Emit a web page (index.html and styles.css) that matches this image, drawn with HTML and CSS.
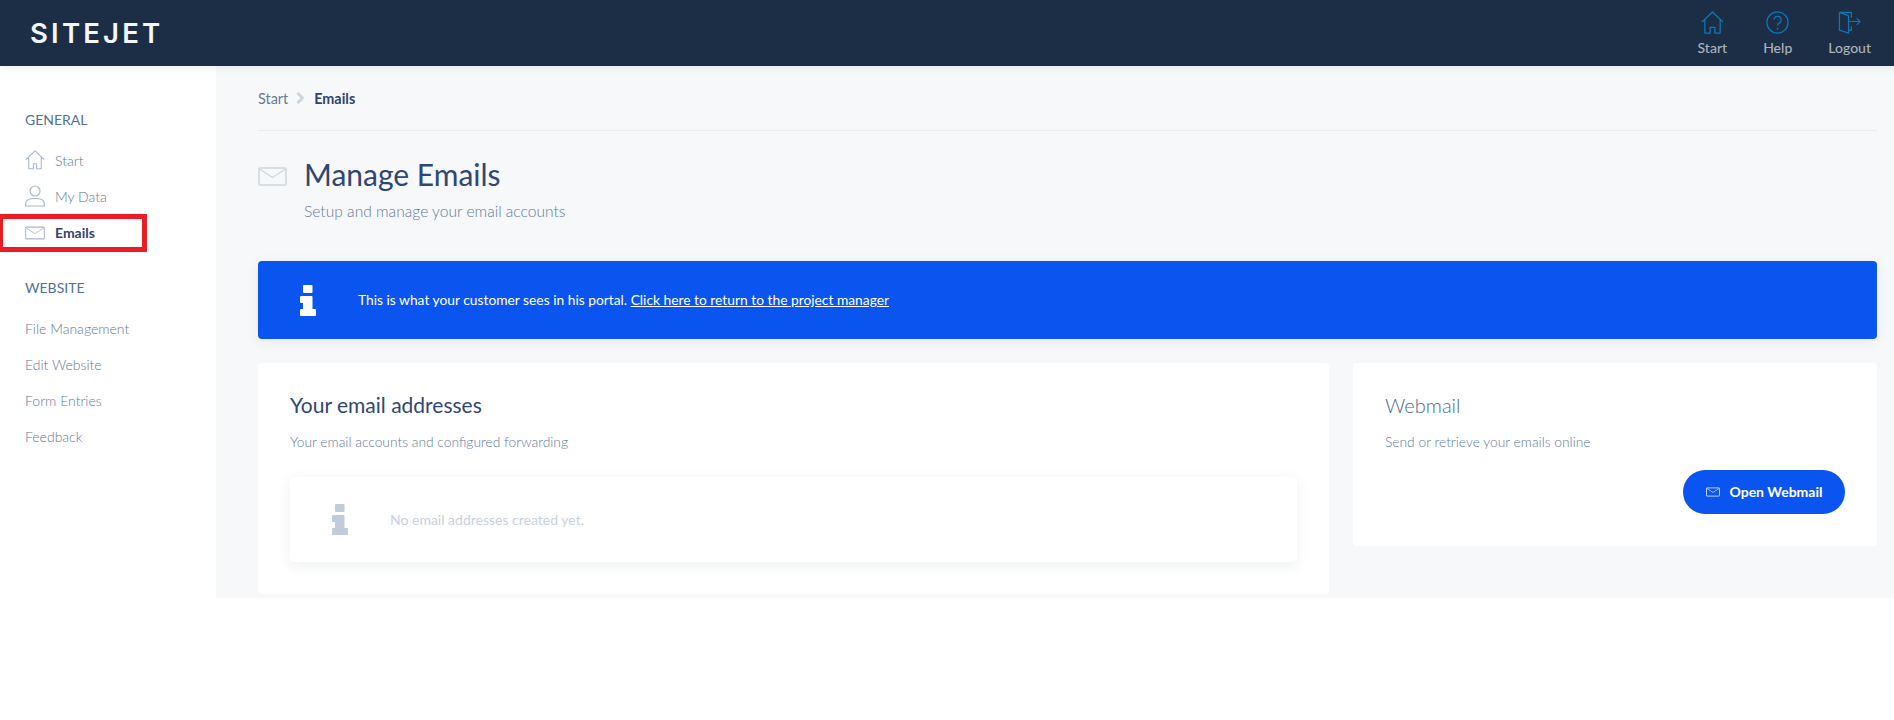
FILE: index.html
```html
<!DOCTYPE html>
<html lang="en">
<head>
<meta charset="utf-8">
<title>Manage Emails</title>
<link rel="stylesheet" href="styles.css">
</head>
<body>
<svg class="defs" width="0" height="0" aria-hidden="true">
  <symbol id="mail" viewBox="0 0 29 19"><rect x="1" y="1" width="27" height="17" rx="1" fill="none" stroke="currentColor" stroke-width="1.5"/><path d="M1.500 2l13 8.500 13-8.500" fill="none" stroke="currentColor" stroke-width="1.200"/></symbol>
  <symbol id="house" viewBox="0 0 24 24"><path d="M1 11.500L12 1l11 10.500M4.500 9v13.500h5.500v-6h4v6h5.500V9" fill="none" stroke="currentColor" stroke-width="1.300" stroke-linejoin="round"/></symbol>
  <symbol id="info" viewBox="0 0 16 31"><path d="M4 0h7.500a1 1 0 0 1 1 1v6a1 1 0 0 1-1 1H4a1 1 0 0 1-1-1V1a1 1 0 0 1 1-1zM1 11h10.500a1 1 0 0 1 1 1v12H15a1 1 0 0 1 1 1v5a1 1 0 0 1-1 1H1a1 1 0 0 1-1-1v-5a1 1 0 0 1 1-1h2v-6H1a1 1 0 0 1-1-1v-5a1 1 0 0 1 1-1z" fill="currentColor"/></symbol>
</svg>

<header class="topbar">
  <div class="logo">SITEJET</div>
  <nav class="topnav">
    <a class="topnav-item">
      <svg class="top-icon" viewBox="0 0 24 24"><path d="M1 11.500L12 1l11 10.500M4 9v14h5.500v-6h5v6H20V9" fill="none" stroke="currentColor" stroke-width="1.300" stroke-linejoin="round"/></svg>
      <span>Start</span>
    </a>
    <a class="topnav-item">
      <svg class="top-icon" viewBox="0 0 24 24"><circle cx="12" cy="12" r="11" fill="none" stroke="currentColor" stroke-width="1.300"/><path d="M8.300 9.200a3.800 3.800 0 1 1 5.800 3.200c-1.300.8-2.100 1.500-2.100 3" fill="none" stroke="currentColor" stroke-width="1.300"/><circle cx="12" cy="18.500" r=".9" fill="currentColor"/></svg>
      <span>Help</span>
    </a>
    <a class="topnav-item">
      <svg class="top-icon" viewBox="0 0 24 24"><path d="M14 7V1.500H1.500V20l9.500 3V5L1.500 1.500M14 16v4h-3" fill="none" stroke="currentColor" stroke-width="1.300" stroke-linejoin="round"/><path d="M11 11h12M19.500 7.500L23 11l-3.500 3.500" fill="none" stroke="currentColor" stroke-width="1.100"/></svg>
      <span>Logout</span>
    </a>
  </nav>
</header>

<div class="shell">
  <aside class="sidebar">
    <h4 class="side-head">GENERAL</h4>
    <ul class="side-list">
      <li class="side-item"><svg class="side-icon"><use href="#house"/></svg>Start</li>
      <li class="side-item"><svg class="side-icon" viewBox="0 0 20 22"><circle cx="10" cy="6" r="5" fill="none" stroke="currentColor" stroke-width="1.200"/><path d="M.7 21v-2.500c0-3 3-5 9.300-5s9.300 2 9.300 5V21z" fill="none" stroke="currentColor" stroke-width="1.200"/></svg>My Data</li>
      <li class="side-item active"><svg class="side-icon mail-icon"><use href="#mail"/></svg>Emails<span class="marker"></span></li>
    </ul>
    <h4 class="side-head second">WEBSITE</h4>
    <ul class="side-list">
      <li class="side-item">File Management</li>
      <li class="side-item">Edit Website</li>
      <li class="side-item">Form Entries</li>
      <li class="side-item">Feedback</li>
    </ul>
  </aside>

  <main class="main">
    <div class="crumbs"><span>Start</span><svg class="crumb-sep" viewBox="0 0 8 12"><path d="M1.500 1l5 5-5 5" fill="none" stroke="currentColor" stroke-width="3"/></svg><strong>Emails</strong></div>

    <div class="page-head">
      <svg class="head-icon"><use href="#mail"/></svg>
      <div>
        <h1>Manage Emails</h1>
        <p>Setup and manage your email accounts</p>
      </div>
    </div>

    <div class="banner">
      <svg class="banner-icon"><use href="#info"/></svg>
      <span class="banner-text">This is what your customer sees in his portal. <a class="banner-link">Click here to return to the project manager</a></span>
    </div>

    <div class="cards">
      <section class="card left">
        <h2>Your email addresses</h2>
        <p class="card-sub">Your email accounts and configured forwarding</p>
        <div class="empty">
          <svg class="empty-icon"><use href="#info"/></svg>
          <span>No email addresses created yet.</span>
        </div>
      </section>
      <section class="card right">
        <h2 class="soft">Webmail</h2>
        <p class="card-sub">Send or retrieve your emails online</p>
        <div class="btn-row">
          <a class="btn"><svg class="btn-icon"><use href="#mail"/></svg><span class="btn-text">Open Webmail</span></a>
        </div>
      </section>
    </div>
  </main>
</div>
</body>
</html>
```

FILE: styles.css
```css
* { box-sizing: border-box; }
html, body { margin: 0; padding: 0; background: #fff; }
body { font-family: Lato, "Liberation Sans", sans-serif; color: #2c3e66; height: 720px; overflow: hidden; }
.defs { position: absolute; }
h1, h2, h4, p, ul { margin: 0; padding: 0; }
ul { list-style: none; }

.topbar { height: 66px; background: #1c2e45; display: flex; justify-content: space-between; align-items: flex-start; padding: 0 23px 0 30px; box-shadow: 0 2px 8px rgba(30,45,70,.08); position: relative; }
.logo { font-family: Inter, sans-serif; font-weight: 600; font-size: 27.500px; letter-spacing: 3.200px; color: #f4f6f8; line-height: 66px; }
.topnav { display: flex; gap: 36px; }
.topnav-item { display: flex; flex-direction: column; align-items: center; color: #a9b2bd; font-size: 14px; font-weight: 500; line-height: 17px; padding-top: 11px; }
.topnav-item span { margin-top: 5px; }
.top-icon { width: 23px; height: 23px; color: #0b78b8; display: block; overflow: visible; }

.shell { display: flex; height: 532px; }
.sidebar { width: 216px; flex: none; background: #fff; padding: 44px 0 0 25px; }
.side-head { font-size: 14px; font-weight: 400; line-height: 20px; color: #4f709b; margin-bottom: 12px; }
.side-head.second { margin-top: 28px; margin-bottom: 12px; }
.side-item { height: 36px; display: flex; align-items: center; font-size: 14px; font-weight: 300; color: #627a9c; position: relative; }
.side-icon { width: 20px; height: 22px; color: #a9b8cc; margin-right: 10px; flex: none; }
.mail-icon { height: 14px; }
.side-item.active { font-weight: 700; color: #2f4470; padding-top: 1px; }
.marker { position: absolute; left: -27px; top: 0; width: 149px; height: 38px; border: 5px solid #ed1c24; }

.main { flex: 1; background: #f7f8fa; padding: 0 17px 0 42px; }
.crumbs { height: 65px; display: flex; align-items: center; border-bottom: 1px solid #e9ebef; font-size: 14.400px; color: #667a95; }
.crumbs strong { color: #2f4470; font-weight: 700; }
.crumb-sep { width: 8px; height: 12px; color: #cdd5e0; margin: 0 10px 0 8px; }
.page-head { display: flex; gap: 17px; margin-top: 25px; height: 105px; }
.head-icon { width: 29px; height: 19px; color: #ccd5e1; margin-top: 11px; flex: none; }
.page-head h1 { font-size: 30px; font-weight: 400; line-height: 36px; color: #2f4774; }
.page-head p { font-size: 15.600px; font-weight: 300; color: #627a9c; line-height: 20px; margin-top: 9px; }

.banner { height: 78px; background: #0a55ef; border-radius: 4px; color: #fff; font-size: 13.800px; font-weight: 400; display: flex; align-items: center; padding-left: 42px; box-shadow: 0 3px 14px rgba(30,45,70,.07); }
.banner-text { padding-bottom: 1px; }
.banner-icon { width: 16px; height: 31px; color: #fff; margin-right: 42px; flex: none; }
.banner-link { text-decoration: underline; }

.cards { display: grid; grid-template-columns: 1fr 524px; gap: 24px; margin-top: 24px; align-items: start; }
.card { background: #fff; border-radius: 4px; padding: 28px 32px 0; }
.card.left { height: 231px; }
.card.right { height: 183px; }
.card h2 { font-size: 21px; font-weight: 400; line-height: 28px; color: #2f4774; }
.card h2.soft { color: #4d6a92; font-size: 20px; font-weight: 300; }
.card-sub { font-size: 13.800px; font-weight: 300; color: #627a9c; line-height: 18px; margin-top: 14px; }
.empty { height: 85px; margin-top: 26px; border-radius: 4px; background: #fff; box-shadow: 0 3px 14px rgba(30,45,70,.08); display: flex; align-items: center; padding-left: 42px; font-size: 14px; color: #c7d1de; }
.empty-icon { width: 16px; height: 31px; color: #c0ccd9; margin-right: 42px; flex: none; }
.btn-row { display: flex; justify-content: flex-end; margin-top: 19px; }
.btn { width: 162px; height: 44px; border-radius: 22px; background: #0a55ef; color: #fff; font-size: 14px; font-weight: 700; display: flex; align-items: center; justify-content: center; }
.btn-text { padding-bottom: 1px; }
.btn-icon { width: 14px; height: 10px; color: #fff; margin-right: 10px; }
```
